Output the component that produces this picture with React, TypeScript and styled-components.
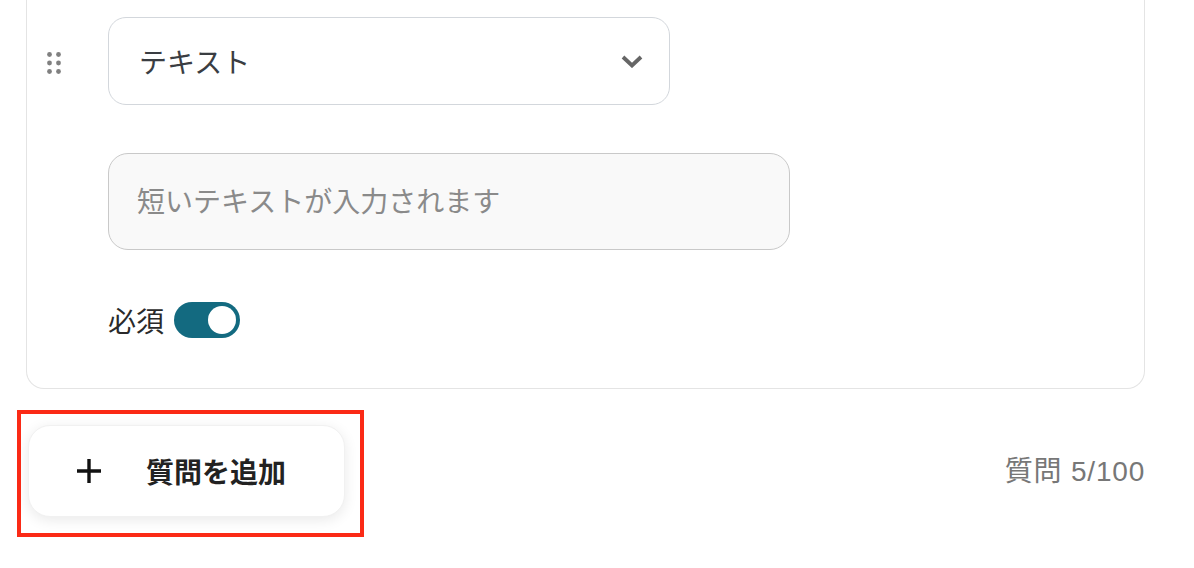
import { styled, createGlobalStyle } from "styled-components";

const GlobalStyle = createGlobalStyle`
  html, body {
    margin: 0;
    padding: 0;
    background: #fff;
  }
  body {
    font-family: "Noto Sans CJK JP", "Noto Sans", sans-serif;
  }
`;

// Layout
const Page = styled.div`
  width: 1194px;
  height: 568px;
  box-sizing: border-box;
  padding: 0 49px 0 17px;
  overflow: hidden;
`;

const Card = styled.div`
  margin-left: 9px;
  border: 1px solid #e4e4e4;
  border-top: none;
  border-radius: 0 0 18px 18px;
  padding: 17px 0 50px 0;
  display: grid;
  grid-template-columns: 81px 1fr;
`;

const HandleCell = styled.div`
  padding: 35px 0 0 20px;
`;

const Fields = styled.div`
  display: flex;
  flex-direction: column;
  align-items: flex-start;
`;

const SelectBox = styled.div`
  box-sizing: border-box;
  width: 562px;
  height: 88px;
  border: 1.5px solid #d3d7dc;
  border-radius: 18px;
  padding: 0 26px 0 30px;
  display: flex;
  align-items: center;
  justify-content: space-between;
  font-size: 28px;
  color: #3a3d42;
`;

const TextInput = styled.input`
  box-sizing: border-box;
  width: 682px;
  height: 97px;
  margin-top: 48px;
  border: 1.5px solid #c9c9c9;
  border-radius: 20px;
  background: #f9f9f9;
  padding: 0 28px 4px;
  font-family: inherit;
  font-size: 28px;
  color: #333;
  outline: none;

  &::placeholder {
    color: #8a8a8a;
  }
`;

const ToggleRow = styled.label`
  margin-top: 52px;
  display: flex;
  align-items: center;
  gap: 10px;
  font-size: 28px;
  color: #2a2a2a;
  line-height: 36px;
`;

const Track = styled.span<{ $on: boolean }>`
  box-sizing: border-box;
  width: 66px;
  height: 36px;
  border-radius: 18px;
  background: ${(p) => (p.$on ? "#136a80" : "#c8c8c8")};
  padding: 4px;
  display: flex;
  justify-content: ${(p) => (p.$on ? "flex-end" : "flex-start")};
`;

const Knob = styled.span`
  width: 28px;
  height: 28px;
  border-radius: 50%;
  background: #fff;
`;

const Footer = styled.div`
  margin-top: 21px;
  display: flex;
  align-items: center;
  justify-content: space-between;
`;

// red annotation frame around the add button
const Highlight = styled.div`
  border: 4px solid #fb2a16;
  padding: 11px 15px 16px 7px;
`;

const AddButton = styled.button`
  box-sizing: border-box;
  width: 317px;
  height: 92px;
  border: 1px solid #f1f1f1;
  border-radius: 22px;
  background: #fff;
  box-shadow: 0 3px 14px rgba(0, 0, 0, 0.09);
  display: flex;
  align-items: center;
  gap: 44px;
  padding: 0 0 0 47px;
  font-family: inherit;
  font-size: 28px;
  font-weight: 700;
  color: #222;
  cursor: pointer;
`;

const Counter = styled.div`
  font-family: "Liberation Sans", "Noto Sans CJK JP", sans-serif;
  font-size: 28px;
  line-height: 30px;
  color: #777;
  letter-spacing: 0.8px;
  margin-bottom: 4px;
`;

function DragHandle() {
  const dots = [];
  for (let r = 0; r < 3; r++) {
    for (let c = 0; c < 2; c++) {
      dots.push(<circle key={`${r}-${c}`} cx={2.5 + c * 9} cy={2.5 + r * 8.5} r={2.4} fill="#808080" />);
    }
  }
  return (
    <svg width="14" height="23" viewBox="0 0 14 23">
      {dots}
    </svg>
  );
}

function Chevron() {
  return (
    <svg width="22" height="13" viewBox="0 0 22 13">
      <polyline points="2,2 11,10.5 20,2" fill="none" stroke="#666" strokeWidth="3.8" strokeLinejoin="miter" />
    </svg>
  );
}

function PlusIcon() {
  return (
    <svg width="26" height="26" viewBox="0 0 26 26">
      <path d="M13 1v24M1 13h24" stroke="#111" strokeWidth="3.4" />
    </svg>
  );
}

export default function App() {
  return (
    <>
      <GlobalStyle />
      <Page>
        <Card>
          <HandleCell>
            <DragHandle />
          </HandleCell>
          <Fields>
            <SelectBox>
              <span>テキスト</span>
              <Chevron />
            </SelectBox>
            <TextInput placeholder="短いテキストが入力されます" />
            <ToggleRow>
              必須
              <Track $on={true}>
                <Knob />
              </Track>
            </ToggleRow>
          </Fields>
        </Card>
        <Footer>
          <Highlight>
            <AddButton>
              <PlusIcon />
              質問を追加
            </AddButton>
          </Highlight>
          <Counter>質問 5/100</Counter>
        </Footer>
      </Page>
    </>
  );
}
